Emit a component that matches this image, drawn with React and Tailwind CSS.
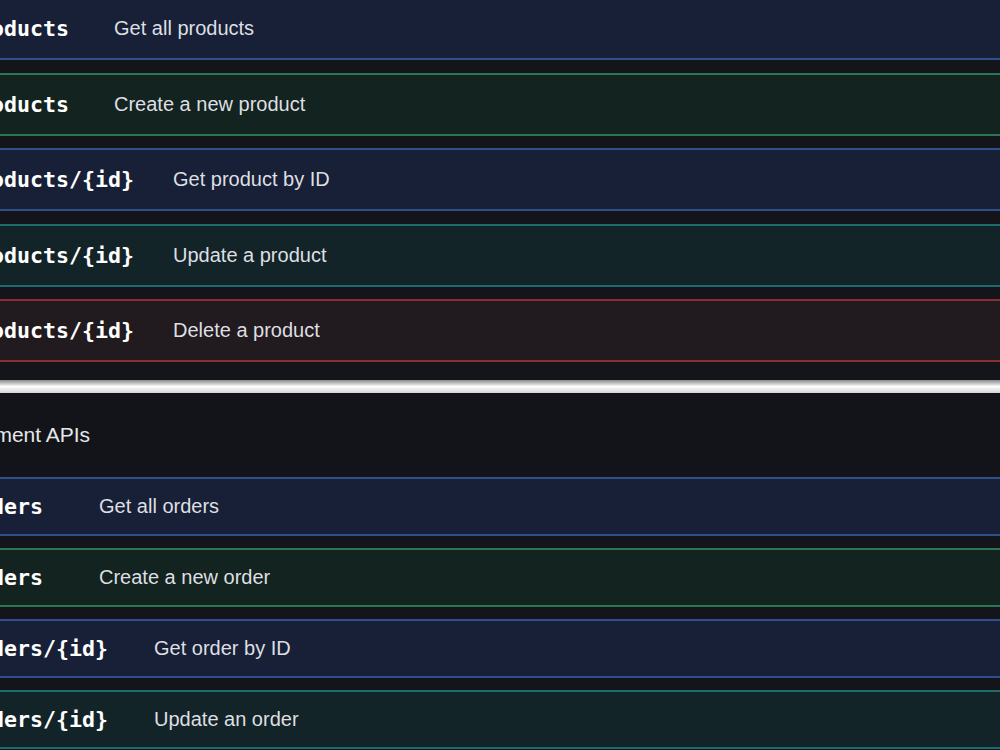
import React from "react";

const METHOD_STYLES = {
  GET: "bg-[#172036] border-[#30508c]",
  POST: "bg-[#13231f] border-[#2b7652]",
  PUT: "bg-[#132429] border-[#1e6b6e]",
  DELETE: "bg-[#211a1e] border-[#8c2d33]",
};

const BADGE_STYLES = {
  GET: "bg-[#3b82f6]",
  POST: "bg-[#22a06b]",
  PUT: "bg-[#14b8a6]",
  DELETE: "bg-[#ef4444]",
};

const productEndpoints = [
  { method: "GET", path: "/api/products", desc: "Get all products", gap: "ml-[45px]" },
  { method: "POST", path: "/api/products", desc: "Create a new product", gap: "ml-[45px]" },
  { method: "GET", path: "/api/products/{id}", desc: "Get product by ID", gap: "ml-[39px]" },
  { method: "PUT", path: "/api/products/{id}", desc: "Update a product", gap: "ml-[39px]" },
  { method: "DELETE", path: "/api/products/{id}", desc: "Delete a product", gap: "ml-[39px]" },
];

const orderEndpoints = [
  { method: "GET", path: "/api/orders", desc: "Get all orders", gap: "ml-[56px]" },
  { method: "POST", path: "/api/orders", desc: "Create a new order", gap: "ml-[56px]" },
  { method: "GET", path: "/api/orders/{id}", desc: "Get order by ID", gap: "ml-[46px]" },
  { method: "PUT", path: "/api/orders/{id}", desc: "Update an order", gap: "ml-[46px]" },
];

function Endpoint({ method, path, desc, gap, height }) {
  return (
    <div
      className={`flex items-center overflow-hidden border-y-2 ${height} ${METHOD_STYLES[method]}`}
    >
      <div className="flex items-center -ml-[190px] whitespace-nowrap">
        <span
          className={`w-[80px] mr-[10px] rounded py-1 text-center text-sm font-bold text-white ${BADGE_STYLES[method]}`}
          style={{ fontFamily: "'Liberation Sans', Arial, sans-serif" }}
        >
          {method}
        </span>
        <span
          className="mt-[2px] text-[21.6px] font-bold text-white"
          style={{ fontFamily: "'DejaVu Sans Mono', 'Liberation Mono', monospace" }}
        >
          {path}
        </span>
        <span
          className={`${gap} text-[20px] text-[#dedfe2]`}
          style={{ fontFamily: "'Liberation Sans', Arial, sans-serif" }}
        >
          {desc}
        </span>
      </div>
    </div>
  );
}

export default function App() {
  return (
    <div className="w-[1000px] h-[750px] overflow-hidden bg-[#13151a]">
      {/* products section */}
      <div className="flex flex-col gap-[12.5px] -mt-[3px]">
        {productEndpoints.map((e, i) => (
          <Endpoint key={i} {...e} height="h-[63px]" />
        ))}
      </div>

      {/* seam between the two captures */}
      <div className="mt-[18px] h-[13px] bg-gradient-to-b from-[#8a8a8a] via-white to-[#d4d4d4]" />

      {/* orders section */}
      <div className="h-[84px] flex items-center overflow-hidden bg-[#121419]">
        <h3
          className="-ml-[141px] whitespace-nowrap text-[21px] text-[#e6e7ea]"
          style={{ fontFamily: "'Liberation Sans', Arial, sans-serif" }}
        >
          Order Management APIs
        </h3>
      </div>
      <div className="flex flex-col gap-[12px]">
        {orderEndpoints.map((e, i) => (
          <Endpoint key={i} {...e} height="h-[59px]" />
        ))}
      </div>
    </div>
  );
}
